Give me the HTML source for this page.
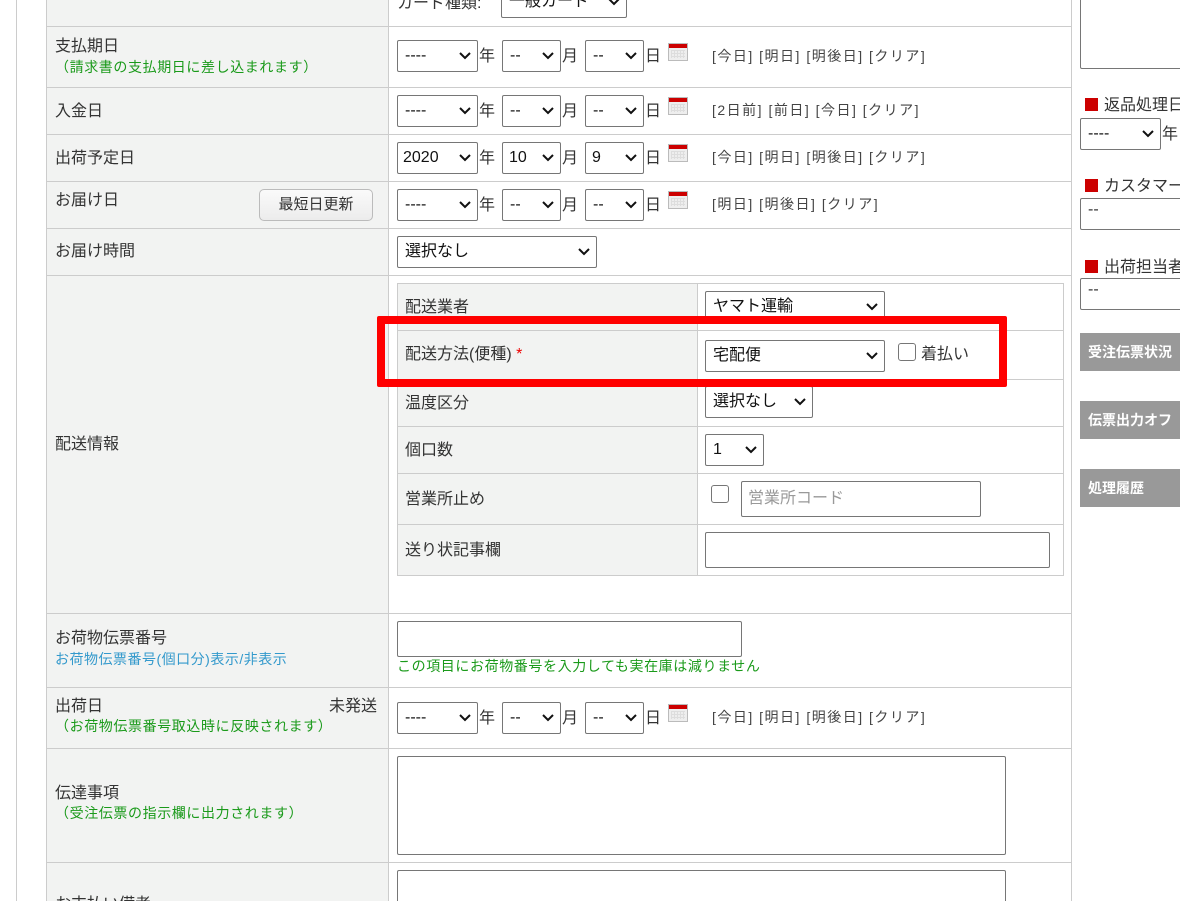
<!DOCTYPE html>
<html style="width:1180px;height:901px;overflow:hidden"><head><meta charset="utf-8"><style>
*{box-sizing:border-box;margin:0;padding:0}
body{width:1180px;height:901px;overflow:hidden;background:#fff;position:relative;font-family:"Liberation Sans","Noto Sans CJK JP",sans-serif;font-size:16px;color:#333}
.a{position:absolute}
.vl{position:absolute;width:1px;background:#ccc}
.hl{position:absolute;height:1px;background:#ccc}
.s{position:absolute;height:32px;border:1px solid #767676;border-radius:2px;background:#fff;font-size:16px;line-height:30px;padding-left:7px;color:#111;white-space:nowrap;overflow:hidden}
.s svg{position:absolute;right:6px;top:11px}
.t{position:absolute;font-size:16px;color:#333;white-space:nowrap}
.g{position:absolute;font-size:14px;color:#1a9a1a;white-space:nowrap;letter-spacing:0.6px}
.lk{position:absolute;font-size:14px;color:#444;white-space:nowrap;letter-spacing:1.5px}
.cal{position:absolute;width:20px;height:18px;background:linear-gradient(#c00 0,#c00 4px,#eee 4px);border:1px solid #bbb}
.cal:after{content:"";position:absolute;left:2px;right:2px;top:6px;bottom:2px;background:repeating-linear-gradient(90deg,#ddd 0 1px,transparent 1px 3px),repeating-linear-gradient(#ddd 0 1px,transparent 1px 3px)}
.in{position:absolute;border:1px solid #767676;border-radius:2px;background:#fff}
.cb{position:absolute;width:18px;height:18px;border:1px solid #767676;border-radius:3px;background:#fff}
.btn{position:absolute;left:1080px;width:100px;height:38px;background:#999;color:#fff;font-weight:bold;font-size:14px;line-height:38px;padding-left:8px;white-space:nowrap;overflow:hidden}
.sq{display:inline-block;width:13px;height:13px;background:#c00;margin-right:6px;vertical-align:-1px}
</style></head><body>
<div class="a" style="left:16px;top:0;width:1px;height:901px;background:#ccc"></div>
<div class="a" style="left:46px;top:0;width:343px;height:901px;background:#f2f3f2"></div>
<div class="vl" style="left:46px;top:0;height:901px"></div>
<div class="vl" style="left:388px;top:0;height:901px"></div>
<div class="vl" style="left:1071px;top:0;height:901px"></div>
<div class="hl" style="left:46px;width:1025px;top:26px"></div>
<div class="hl" style="left:46px;width:1025px;top:87px"></div>
<div class="hl" style="left:46px;width:1025px;top:134px"></div>
<div class="hl" style="left:46px;width:1025px;top:181px"></div>
<div class="hl" style="left:46px;width:1025px;top:228px"></div>
<div class="hl" style="left:46px;width:1025px;top:275px"></div>
<div class="hl" style="left:46px;width:1025px;top:613px"></div>
<div class="hl" style="left:46px;width:1025px;top:687px"></div>
<div class="hl" style="left:46px;width:1025px;top:748px"></div>
<div class="hl" style="left:46px;width:1025px;top:862px"></div>

<div class="t" style="left:397px;top:-11px">カード種類:</div>
<div class="s" style="left:501px;top:-14px;width:126px">一般カード<svg width="12" height="8"><path d="M1 1l5 5 5-5" stroke="#111" stroke-width="2" fill="none"/></svg></div>

<div class="t" style="left:55px;top:32px">支払期日</div>
<div class="g" style="left:55px;top:57px">（請求書の支払期日に差し込まれます）</div>
<div class="t" style="left:55px;top:97px">入金日</div>
<div class="t" style="left:55px;top:144px">出荷予定日</div>
<div class="t" style="left:55px;top:186px">お届け日</div>
<div class="a" style="left:259px;top:189px;width:114px;height:32px;border:1px solid #bbb;border-radius:5px;background:linear-gradient(#fafafa,#ececec);font-size:15px;line-height:30px;text-align:center;color:#333">最短日更新</div>
<div class="t" style="left:55px;top:237px">お届け時間</div>
<div class="t" style="left:55px;top:430px">配送情報</div>
<div class="t" style="left:55px;top:624px">お荷物伝票番号</div>
<div class="a" style="left:55px;top:649px;font-size:14px;color:#3399cc;white-space:nowrap;letter-spacing:0.5px">お荷物伝票番号(個口分)表示/非表示</div>
<div class="t" style="left:55px;top:692px">出荷日</div>
<div class="t" style="left:329px;top:692px">未発送</div>
<div class="g" style="left:55px;top:716px">（お荷物伝票番号取込時に反映されます）</div>
<div class="t" style="left:55px;top:779px">伝達事項</div>
<div class="g" style="left:55px;top:803px">（受注伝票の指示欄に出力されます）</div>

<div class="s" style="left:397px;top:40px;width:81px">----<svg width="12" height="8"><path d="M1 1l5 5 5-5" stroke="#111" stroke-width="2" fill="none"/></svg></div><div class="t" style="left:479px;top:42px">年</div>
<div class="s" style="left:502px;top:40px;width:59px">--<svg width="12" height="8"><path d="M1 1l5 5 5-5" stroke="#111" stroke-width="2" fill="none"/></svg></div><div class="t" style="left:562px;top:42px">月</div>
<div class="s" style="left:585px;top:40px;width:59px">--<svg width="12" height="8"><path d="M1 1l5 5 5-5" stroke="#111" stroke-width="2" fill="none"/></svg></div><div class="t" style="left:645px;top:42px">日</div>
<div class="cal" style="left:668px;top:43px"></div>
<div class="lk" style="left:712px;top:46px">[今日] [明日] [明後日] [クリア]</div>

<div class="s" style="left:397px;top:95px;width:81px">----<svg width="12" height="8"><path d="M1 1l5 5 5-5" stroke="#111" stroke-width="2" fill="none"/></svg></div><div class="t" style="left:479px;top:97px">年</div>
<div class="s" style="left:502px;top:95px;width:59px">--<svg width="12" height="8"><path d="M1 1l5 5 5-5" stroke="#111" stroke-width="2" fill="none"/></svg></div><div class="t" style="left:562px;top:97px">月</div>
<div class="s" style="left:585px;top:95px;width:59px">--<svg width="12" height="8"><path d="M1 1l5 5 5-5" stroke="#111" stroke-width="2" fill="none"/></svg></div><div class="t" style="left:645px;top:97px">日</div>
<div class="cal" style="left:668px;top:97px"></div>
<div class="lk" style="left:712px;top:100px">[2日前] [前日] [今日] [クリア]</div>

<div class="s" style="left:397px;top:142px;width:81px;padding-left:5px">2020<svg width="12" height="8"><path d="M1 1l5 5 5-5" stroke="#111" stroke-width="2" fill="none"/></svg></div><div class="t" style="left:479px;top:144px">年</div>
<div class="s" style="left:502px;top:142px;width:59px;padding-left:6px">10<svg width="12" height="8"><path d="M1 1l5 5 5-5" stroke="#111" stroke-width="2" fill="none"/></svg></div><div class="t" style="left:562px;top:144px">月</div>
<div class="s" style="left:585px;top:142px;width:59px;padding-left:6px">9<svg width="12" height="8"><path d="M1 1l5 5 5-5" stroke="#111" stroke-width="2" fill="none"/></svg></div><div class="t" style="left:645px;top:144px">日</div>
<div class="cal" style="left:668px;top:144px"></div>
<div class="lk" style="left:712px;top:147px">[今日] [明日] [明後日] [クリア]</div>

<div class="s" style="left:397px;top:189px;width:81px">----<svg width="12" height="8"><path d="M1 1l5 5 5-5" stroke="#111" stroke-width="2" fill="none"/></svg></div><div class="t" style="left:479px;top:191px">年</div>
<div class="s" style="left:502px;top:189px;width:59px">--<svg width="12" height="8"><path d="M1 1l5 5 5-5" stroke="#111" stroke-width="2" fill="none"/></svg></div><div class="t" style="left:562px;top:191px">月</div>
<div class="s" style="left:585px;top:189px;width:59px">--<svg width="12" height="8"><path d="M1 1l5 5 5-5" stroke="#111" stroke-width="2" fill="none"/></svg></div><div class="t" style="left:645px;top:191px">日</div>
<div class="cal" style="left:668px;top:191px"></div>
<div class="lk" style="left:712px;top:194px">[明日] [明後日] [クリア]</div>

<div class="s" style="left:397px;top:236px;width:200px">選択なし<svg width="12" height="8"><path d="M1 1l5 5 5-5" stroke="#111" stroke-width="2" fill="none"/></svg></div>

<div class="a" style="left:397px;top:283px;width:300px;height:292px;background:#f2f3f2"></div>
<div class="a" style="left:397px;top:283px;width:667px;height:293px;border:1px solid #ccc"></div>
<div class="vl" style="left:697px;top:283px;height:292px"></div>
<div class="hl" style="left:397px;width:667px;top:330px"></div>
<div class="hl" style="left:397px;width:667px;top:379px"></div>
<div class="hl" style="left:397px;width:667px;top:426px"></div>
<div class="hl" style="left:397px;width:667px;top:473px"></div>
<div class="hl" style="left:397px;width:667px;top:524px"></div>
<div class="t" style="left:405px;top:293px">配送業者</div>
<div class="t" style="left:405px;top:340px">配送方法(便種) <span style="color:#e00">*</span></div>
<div class="t" style="left:405px;top:389px">温度区分</div>
<div class="t" style="left:405px;top:436px">個口数</div>
<div class="t" style="left:405px;top:485px">営業所止め</div>
<div class="t" style="left:405px;top:536px">送り状記事欄</div>
<div class="s" style="left:705px;top:291px;width:180px">ヤマト運輸<svg width="12" height="8"><path d="M1 1l5 5 5-5" stroke="#111" stroke-width="2" fill="none"/></svg></div>
<div class="s" style="left:705px;top:340px;width:180px">宅配便<svg width="12" height="8"><path d="M1 1l5 5 5-5" stroke="#111" stroke-width="2" fill="none"/></svg></div>
<div class="cb" style="left:898px;top:343px"></div><div class="t" style="left:921px;top:340px">着払い</div>
<div class="s" style="left:705px;top:386px;width:108px">選択なし<svg width="12" height="8"><path d="M1 1l5 5 5-5" stroke="#111" stroke-width="2" fill="none"/></svg></div>
<div class="s" style="left:705px;top:434px;width:59px">1<svg width="12" height="8"><path d="M1 1l5 5 5-5" stroke="#111" stroke-width="2" fill="none"/></svg></div>
<div class="cb" style="left:711px;top:485px"></div>
<div class="in" style="left:741px;top:481px;width:240px;height:36px"></div><div class="t" style="left:748px;top:484px;color:#999">営業所コード</div>
<div class="in" style="left:705px;top:532px;width:345px;height:36px"></div>
<div class="a" style="left:377px;top:316px;width:630px;height:71px;border:8px solid #f00;border-radius:2px"></div>

<div class="in" style="left:397px;top:621px;width:345px;height:36px"></div>
<div class="g" style="left:397px;top:656px">この項目にお荷物番号を入力しても実在庫は減りません</div>
<div class="s" style="left:397px;top:702px;width:81px">----<svg width="12" height="8"><path d="M1 1l5 5 5-5" stroke="#111" stroke-width="2" fill="none"/></svg></div><div class="t" style="left:479px;top:704px">年</div>
<div class="s" style="left:502px;top:702px;width:59px">--<svg width="12" height="8"><path d="M1 1l5 5 5-5" stroke="#111" stroke-width="2" fill="none"/></svg></div><div class="t" style="left:562px;top:704px">月</div>
<div class="s" style="left:585px;top:702px;width:59px">--<svg width="12" height="8"><path d="M1 1l5 5 5-5" stroke="#111" stroke-width="2" fill="none"/></svg></div><div class="t" style="left:645px;top:704px">日</div>
<div class="cal" style="left:668px;top:704px"></div>
<div class="lk" style="left:712px;top:707px">[今日] [明日] [明後日] [クリア]</div>
<div class="in" style="left:397px;top:756px;width:609px;height:99px"></div>
<div class="in" style="left:397px;top:870px;width:609px;height:60px"></div>
<div class="t" style="left:55px;top:890px">お支払い備考</div>

<div class="in" style="left:1080px;top:-10px;width:120px;height:79px"></div>
<div class="t" style="left:1085px;top:91px"><span class="sq"></span>返品処理日</div>
<div class="s" style="left:1080px;top:118px;width:81px">----<svg width="12" height="8"><path d="M1 1l5 5 5-5" stroke="#111" stroke-width="2" fill="none"/></svg></div><div class="t" style="left:1162px;top:120px">年</div>
<div class="t" style="left:1085px;top:172px"><span class="sq"></span>カスタマー</div>
<div class="in" style="left:1080px;top:198px;width:120px;height:32px"></div><div class="t" style="left:1088px;top:201px">--</div>
<div class="t" style="left:1085px;top:253px"><span class="sq"></span>出荷担当者</div>
<div class="in" style="left:1080px;top:278px;width:120px;height:32px"></div><div class="t" style="left:1088px;top:281px">--</div>
<div class="btn" style="top:333px">受注伝票状況</div>
<div class="btn" style="top:401px">伝票出力オフ</div>
<div class="btn" style="top:469px">処理履歴</div>
</body></html>
